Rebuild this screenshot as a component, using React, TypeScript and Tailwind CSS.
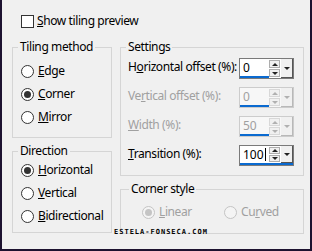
import clsx from "clsx"

function Radio({ checked, disabled }: { checked?: boolean; disabled?: boolean }) {
  return (
    <span
      className={clsx(
        "flex h-[13px] w-[13px] shrink-0 items-center justify-center rounded-full border",
        disabled ? "border-[#c4c4c4] bg-[#f4f4f4]" : "border-[#333333] bg-white",
      )}
    >
      {checked && (
        <span className={clsx("h-[7px] w-[7px] rounded-full", disabled ? "bg-[#c4c4c4]" : "bg-[#333333]")} />
      )}
    </span>
  )
}

function Option({
  label,
  accel,
  checked,
  disabled,
}: {
  label: string
  accel: number
  checked?: boolean
  disabled?: boolean
}) {
  return (
    <div className="flex h-[16px] items-center gap-[4px]">
      <Radio checked={checked} disabled={disabled} />
      <span className={clsx("whitespace-nowrap", disabled ? "text-[#a0a0a0]" : "text-black")}>
        {label.slice(0, accel)}
        <span className="underline">{label[accel]}</span>
        {label.slice(accel + 1)}
      </span>
    </div>
  )
}

function SpinField({ value, disabled, focused }: { value: string; disabled?: boolean; focused?: boolean }) {
  return (
    <div
      className={clsx(
        "flex h-[21px] w-[55px] shrink-0 border",
        disabled ? "border-[#cccccc] bg-[#f7f7f7]" : "border-[#7a7a7a] bg-white",
      )}
    >
      <div className={clsx("flex flex-1", focused && "border-b-2 border-[#0a6ad0]")}>
        <div
          className={clsx(
            "flex w-[29px] items-center pl-[3px] leading-none tracking-normal",
            !focused && "border-b-2 border-[#0a6ad0]",
            disabled ? "text-[#a0a0a0]" : "text-black",
          )}
        >
          {value}
          {focused && <span className="ml-[1px] h-[13px] w-px bg-black" />}
        </div>
        <div className="flex w-[11px] flex-col gap-px py-px">
          <div
            className={clsx(
              "flex flex-1 items-center justify-center border",
              disabled ? "border-[#d8d8d8] bg-[#f0f0f0]" : "border-[#adadad] bg-[#f0f0f0]",
            )}
          >
            <span
              className={clsx(
                "h-0 w-0 border-x-[3px] border-b-[3px] border-x-transparent",
                disabled ? "border-b-[#b0b0b0]" : "border-b-[#222222]",
              )}
            />
          </div>
          <div
            className={clsx(
              "flex flex-1 items-center justify-center border",
              disabled ? "border-[#d8d8d8] bg-[#f0f0f0]" : "border-[#adadad] bg-[#f0f0f0]",
            )}
          >
            <span
              className={clsx(
                "h-0 w-0 border-x-[3px] border-t-[3px] border-x-transparent",
                disabled ? "border-t-[#b0b0b0]" : "border-t-[#222222]",
              )}
            />
          </div>
        </div>
        <div
          className={clsx(
            "ml-px flex w-[12px] items-center justify-center border-r border-b",
            disabled ? "border-[#b8b8b8] bg-[#f0f0f0]" : "border-[#555555] bg-[#f0f0f0]",
          )}
        >
          <span
            className={clsx(
              "h-0 w-0 border-x-[3px] border-t-[3px] border-x-transparent",
              disabled ? "border-t-[#b0b0b0]" : "border-t-[#222222]",
            )}
          />
        </div>
      </div>
    </div>
  )
}

function Row({
  label,
  accel,
  value,
  disabled,
  focused,
}: {
  label: string
  accel: number
  value: string
  disabled?: boolean
  focused?: boolean
}) {
  return (
    <div className="flex h-[21px] items-start">
      <span
        className={clsx(
          "w-[111px] whitespace-nowrap pt-[1px] leading-[16px]",
          disabled ? "text-[#a0a0a0]" : "text-black",
        )}
      >
        {label.slice(0, accel)}
        <span className="underline">{label[accel]}</span>
        {label.slice(accel + 1)}
      </span>
      <SpinField value={value} disabled={disabled} focused={focused} />
    </div>
  )
}

export default function App() {
  return (
    <div className="relative h-[251px] w-[312px] border-x-2 border-b-2 border-[#1d1230] bg-[#f0f0f0] pl-[10px] pt-[13px] font-['Noto_Sans',sans-serif] text-[12px] leading-[16px] tracking-[-0.4px] text-black">
      {/* Top checkbox */}
      <div className="ml-[9px] flex h-[16px] items-center gap-[3px]">
        <span className="h-[13px] w-[13px] border border-[#333333] bg-white" />
        <span>
          <span className="underline">S</span>how tiling preview
        </span>
      </div>

      <div className="mt-[10px] flex gap-[8px]">
        {/* Left column */}
        <div className="flex w-[100px] flex-col gap-[5px]">
          <fieldset className="h-[99px] border border-[#d5d5d5] pl-[8px]">
            <legend className="ml-[-3px] px-[2px]">Tiling method</legend>
            <div className="mt-[8px] flex flex-col gap-[7px]">
              <Option label="Edge" accel={0} />
              <Option label="Corner" accel={0} checked />
              <Option label="Mirror" accel={0} />
            </div>
          </fieldset>
          <fieldset className="h-[90px] border border-[#d5d5d5] pl-[8px]">
            <legend className="ml-[-3px] px-[2px]">Direction</legend>
            <div className="mt-[3px] flex flex-col gap-[7px]">
              <Option label="Horizontal" accel={0} checked />
              <Option label="Vertical" accel={0} />
              <Option label="Bidirectional" accel={0} />
            </div>
          </fieldset>
        </div>

        {/* Right column */}
        <div className="flex w-[184px] flex-col gap-[5px]">
          <fieldset className="h-[137px] border border-[#d5d5d5] pl-[7px]">
            <legend className="ml-[-2px] px-[2px]">Settings</legend>
            <div className="mt-[3px] flex flex-col gap-[8px]">
              <Row label="Horizontal offset (%):" accel={1} value="0" />
              <Row label="Vertical offset (%):" accel={2} value="0" disabled />
              <Row label="Width (%):" accel={0} value="50" disabled />
              <Row label="Transition (%):" accel={0} value="100" focused />
            </div>
          </fieldset>
          <fieldset className="h-[53px] border border-[#d5d5d5] pl-[21px]">
            <legend className="ml-[-13px] px-[2px]">Corner style</legend>
            <div className="mt-[7px] flex">
              <div className="w-[82px]">
                <Option label="Linear" accel={0} checked disabled />
              </div>
              <Option label="Curved" accel={2} disabled />
            </div>
          </fieldset>
        </div>
      </div>

      {/* watermark */}
      <span className="absolute left-[112px] top-[229px] font-['DejaVu_Sans_Mono',monospace] text-[7px] font-bold leading-none tracking-[1px] text-black">
        ESTELA-FONSECA.COM
      </span>
    </div>
  )
}
